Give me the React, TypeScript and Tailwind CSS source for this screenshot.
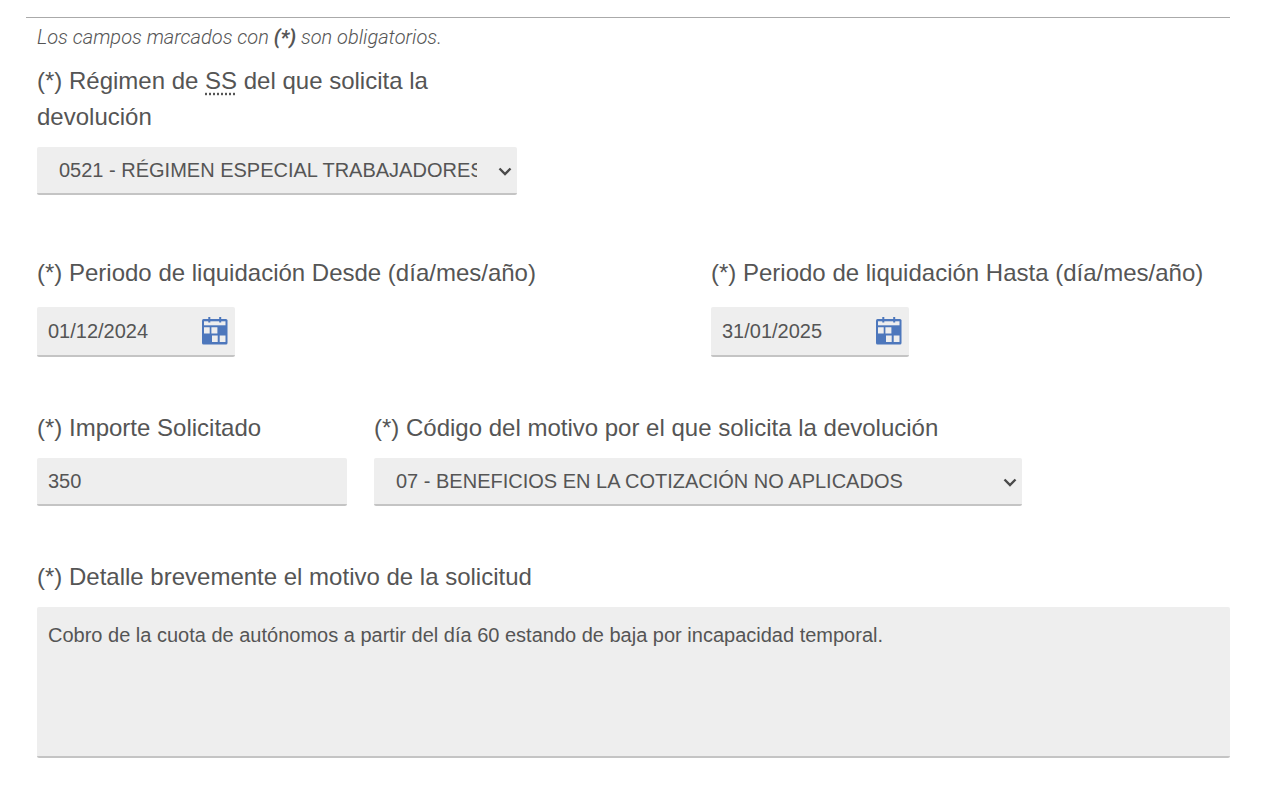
import React, { useState } from 'react';

const fieldClass =
  'w-full rounded-xs border-b-2 border-[#c4c4c4] bg-[#eeeeee] text-xl text-[#555555] outline-none focus:border-[#4d77bc]';

interface FieldProps {
  id: string;
  label: React.ReactNode;
  children: React.ReactNode;
}

const Field: React.FC<FieldProps> = ({ id, label, children }) => (
  <div className="flex flex-col gap-3">
    <label htmlFor={id} className="text-2xl leading-9">
      {label}
    </label>
    {children}
  </div>
);

interface SelectFieldProps {
  id: string;
  options: string[];
}

const SelectField: React.FC<SelectFieldProps> = ({ id, options }) => (
  <div className="relative">
    <select id={id} className={`${fieldClass} h-12 appearance-none pr-10 pl-[22px]`}>
      {options.map(option => (
        <option key={option}>{option}</option>
      ))}
    </select>
    <svg
      className="pointer-events-none absolute top-[18px] right-1 h-3 w-4"
      viewBox="0 0 16 12"
      fill="none"
      stroke="#4a4a4a"
      strokeWidth="2.4"
      aria-hidden="true"
    >
      <path d="M2.500 3.500 8 9l5.500-5.500" />
    </svg>
  </div>
);

const CalendarIcon: React.FC = () => (
  <svg className="h-7 w-[26px]" viewBox="0 0 26 28" aria-hidden="true">
    <rect x="0" y="2" width="25.500" height="25.500" rx="1.500" fill="#4d77bc" />
    <rect x="2" y="4.300" width="21.500" height="4" fill="#eeeeee" />
    <path d="M7.300 0v5.500M18.200 0v5.500" stroke="#4d77bc" strokeWidth="2" />
    <path
      d="M2 10.300h5.700v6.200H2zM9.400 10.300h6v6.200h-6zM10 18.500h5.700v6.500H10zM17.700 18.500h5.800v6.500h-5.800z"
      fill="#eeeeee"
    />
  </svg>
);

interface DateFieldProps {
  id: string;
  value: string;
  onChange: (value: string) => void;
}

const DateField: React.FC<DateFieldProps> = ({ id, value, onChange }) => (
  <div className="mt-1 flex h-[50px] w-[198px] items-center rounded-xs border-b-2 border-[#c4c4c4] bg-[#eeeeee] pr-[7px] pl-[11px]">
    <input
      id={id}
      type="text"
      value={value}
      onChange={e => onChange(e.target.value)}
      className="min-w-0 flex-1 bg-transparent text-xl text-[#555555] outline-none"
    />
    <button type="button" aria-label="Abrir calendario" className="cursor-pointer">
      <CalendarIcon />
    </button>
  </div>
);

export default function App() {
  const [desde, setDesde] = useState('01/12/2024');
  const [hasta, setHasta] = useState('31/01/2025');
  const [importe, setImporte] = useState('350');
  const [detalle, setDetalle] = useState(
    'Cobro de la cuota de autónomos a partir del día 60 estando de baja por incapacidad temporal.'
  );

  return (
    <main className="bg-white pt-[17px] pr-[38px] pb-[29px] pl-[26px] font-['Liberation_Sans',Arial,sans-serif] text-[#555555]">
      <form className="border-t border-[#aaaaaa] pl-[11px]">
        <p className="pt-[3px] font-[Roboto,sans-serif] text-xl leading-8 font-light italic">
          Los campos marcados con <strong className="font-bold">(*)</strong> son obligatorios.
        </p>

        {/* Régimen */}
        <div className="mt-[10px] max-w-[480px]">
          <Field
            id="regimen"
            label={
              <>
                (*) Régimen de{' '}
                <abbr title="Seguridad Social" className="underline decoration-dotted underline-offset-4">
                  SS
                </abbr>{' '}
                del que solicita la
                <br />
                devolución
              </>
            }
          >
            <SelectField id="regimen" options={['0521 - RÉGIMEN ESPECIAL TRABAJADORES AUTÓNOMOS']} />
          </Field>
        </div>

        {/* Periodo de liquidación */}
        <div className="mt-[60px] grid grid-cols-[674fr_519fr]">
          <Field id="desde" label="(*) Periodo de liquidación Desde (día/mes/año)">
            <DateField id="desde" value={desde} onChange={setDesde} />
          </Field>
          <Field id="hasta" label="(*) Periodo de liquidación Hasta (día/mes/año)">
            <DateField id="hasta" value={hasta} onChange={setHasta} />
          </Field>
        </div>

        {/* Importe y motivo */}
        <div className="mt-[53px] grid max-w-[985px] grid-cols-[310fr_648fr] gap-[27px]">
          <Field id="importe" label="(*) Importe Solicitado">
            <input
              id="importe"
              type="text"
              value={importe}
              onChange={e => setImporte(e.target.value)}
              className={`${fieldClass} h-12 px-[11px]`}
            />
          </Field>
          <Field id="motivo" label="(*) Código del motivo por el que solicita la devolución">
            <SelectField id="motivo" options={['07 - BENEFICIOS EN LA COTIZACIÓN NO APLICADOS']} />
          </Field>
        </div>

        <div className="mt-[53px]">
          <Field id="detalle" label="(*) Detalle brevemente el motivo de la solicitud">
            <textarea
              id="detalle"
              value={detalle}
              onChange={e => setDetalle(e.target.value)}
              className={`${fieldClass} block h-[151px] resize-none px-[11px] py-[14px]`}
            />
          </Field>
        </div>
      </form>
    </main>
  );
}
